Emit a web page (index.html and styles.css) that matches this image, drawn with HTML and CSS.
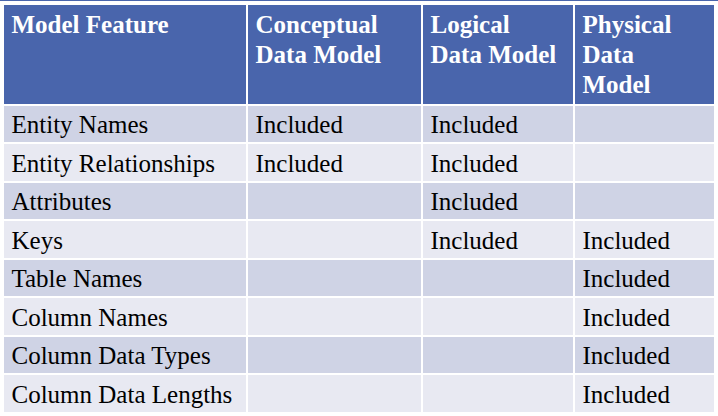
FILE: index.html
```html
<!DOCTYPE html>
<html>
<head>
<meta charset="utf-8">
<link rel="stylesheet" href="styles.css">
</head>
<body>
<div class="topline"></div>
<div class="wrap">
  <div class="grid">
    <div class="cell head">Model Feature</div>
    <div class="cell head">Conceptual Data Model</div>
    <div class="cell head">Logical Data Model</div>
    <div class="cell head">Physical Data Model</div>

    <div class="cell dark">Entity Names</div>
    <div class="cell dark">Included</div>
    <div class="cell dark">Included</div>
    <div class="cell dark"></div>

    <div class="cell light">Entity Relationships</div>
    <div class="cell light">Included</div>
    <div class="cell light">Included</div>
    <div class="cell light"></div>

    <div class="cell dark">Attributes</div>
    <div class="cell dark"></div>
    <div class="cell dark">Included</div>
    <div class="cell dark"></div>

    <div class="cell light">Keys</div>
    <div class="cell light"></div>
    <div class="cell light">Included</div>
    <div class="cell light">Included</div>

    <div class="cell dark">Table Names</div>
    <div class="cell dark"></div>
    <div class="cell dark"></div>
    <div class="cell dark">Included</div>

    <div class="cell light">Column Names</div>
    <div class="cell light"></div>
    <div class="cell light"></div>
    <div class="cell light">Included</div>

    <div class="cell dark">Column Data Types</div>
    <div class="cell dark"></div>
    <div class="cell dark"></div>
    <div class="cell dark">Included</div>

    <div class="cell light">Column Data Lengths</div>
    <div class="cell light"></div>
    <div class="cell light"></div>
    <div class="cell light">Included</div>
  </div>
</div>
</body>
</html>
```
FILE: styles.css
```css
html, body {
  margin: 0;
  padding: 0;
  background: #ffffff;
}
body {
  width: 718px;
  height: 416px;
  overflow: hidden;
  font-family: "Liberation Serif", "Times New Roman", serif;
  font-size: 25px;
  line-height: 30px;
  color: #000000;
}
.topline {
  height: 1px;
  background: #4965ac;
}
.wrap {
  padding: 4px 0 0 4px;
}
.grid {
  display: grid;
  grid-template-columns: 242px 173px 150px 139px;
  grid-template-rows: 98.5px repeat(8, 36.5px);
  column-gap: 2px;
  row-gap: 2px;
}
.cell {
  padding: 4.5px 9px 0 7.5px;
  box-sizing: border-box;
  overflow: hidden;
}
.head {
  background: #4965ac;
  color: #ffffff;
  font-weight: bold;
  padding-top: 5px;
}
.dark {
  background: #cfd3e5;
}
.light {
  background: #e8e9f2;
}
```
